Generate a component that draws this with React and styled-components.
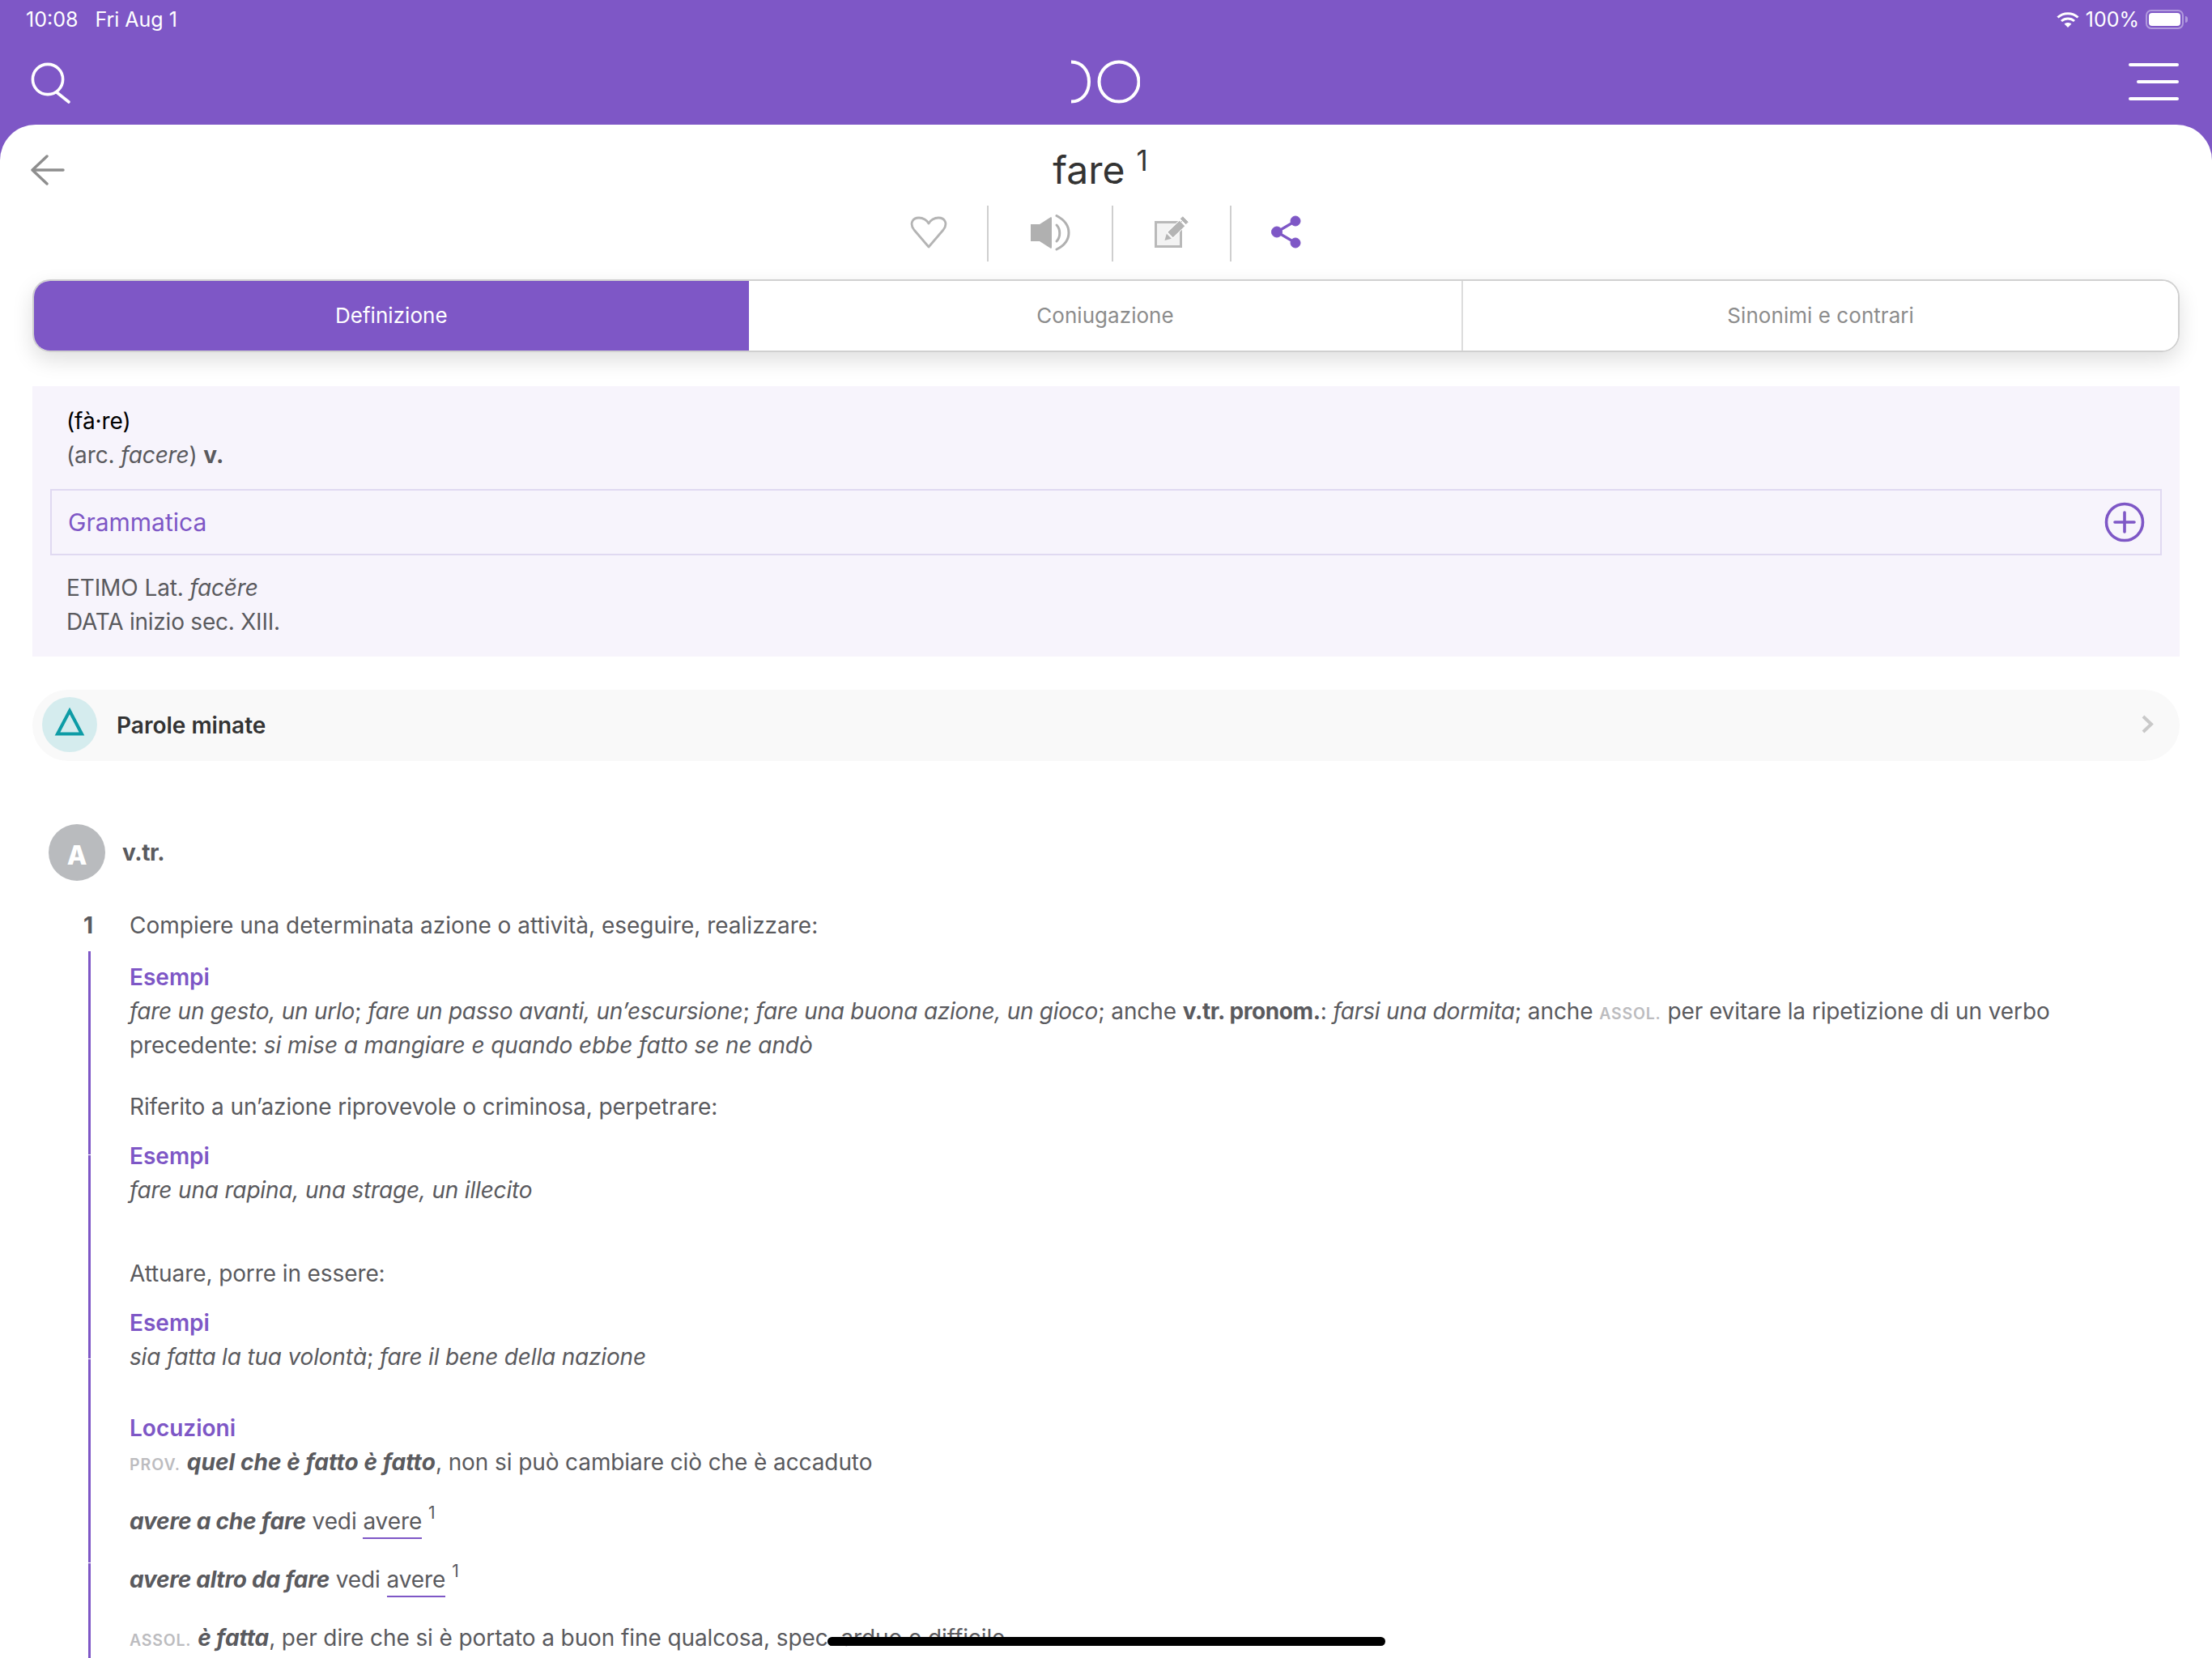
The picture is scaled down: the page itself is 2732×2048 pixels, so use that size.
import React from "react";
import styled, { createGlobalStyle } from "styled-components";

const PURPLE = "#7e57c6";
const TEXT = "#5a5a5e";

const Global = createGlobalStyle`
  html, body { margin: 0; padding: 0; background: #fff; }
  * { box-sizing: border-box; }
`;

const Screen = styled.div`
  position: relative;
  width: 2732px;
  height: 2048px;
  overflow: hidden;
  display: flex;
  flex-direction: column;
  background: ${PURPLE};
  font-family: Inter, "Noto Sans", sans-serif;
  font-size: 28px;
  line-height: 42px;
  letter-spacing: -0.1px;
  color: ${TEXT};
`;

const StatusBar = styled.div`
  height: 48px;
  flex: none;
  display: flex;
  align-items: center;
  justify-content: space-between;
  padding: 0 35px 0 32px;
  color: #fff;
  font-size: 25px;
  letter-spacing: 0;
  line-height: 48px;
`;
const StatusGroup = styled.div`
  display: flex;
  align-items: center;
  gap: ${(p) => p.$gap}px;
`;
const Battery = styled.div`
  position: relative;
  width: 47px;
  height: 24px;
  border: 2px solid rgba(255, 255, 255, 0.4);
  border-radius: 7px;
  padding: 2px;
  &::before {
    content: "";
    display: block;
    height: 100%;
    background: #fff;
    border-radius: 4px;
  }
  &::after {
    content: "";
    position: absolute;
    right: -7px;
    top: 6px;
    width: 3px;
    height: 8px;
    background: rgba(255, 255, 255, 0.4);
    border-radius: 0 3px 3px 0;
  }
`;

const NavBar = styled.div`
  height: 106px;
  flex: none;
  display: grid;
  grid-template-columns: 1fr auto 1fr;
  align-items: center;
  padding: 0 41px 0 38px;
`;
const MenuButton = styled.div`
  justify-self: end;
  width: 62px;
  display: flex;
  flex-direction: column;
  align-items: flex-end;
  gap: 17px;
`;
const MenuLine = styled.span`
  display: block;
  height: 4px;
  border-radius: 2px;
  background: #fff;
  width: ${(p) => p.$w}px;
`;

const Sheet = styled.div`
  flex: 1;
  min-height: 0;
  background: #fff;
  border-radius: 44px 44px 0 0;
  padding: 0 40px;
`;
const TitleRow = styled.div`
  height: 100px;
  display: grid;
  grid-template-columns: 1fr auto 1fr;
  align-items: start;
`;
const Back = styled.div`
  padding-top: 37px;
  height: 100px;
  margin-left: -2px;
  display: flex;
`;
const Title = styled.h1`
  margin: 0 7px 0 -7px;
  padding-top: 26px;
  font-size: 48px;
  line-height: 60px;
  font-weight: 400;
  letter-spacing: 0;
  color: #333;
  white-space: nowrap;
  sup {
    font-size: 35px;
    line-height: 0;
    margin-left: 14px;
    position: relative;
    top: 1px;
    vertical-align: super;
  }
`;
const ActionRow = styled.div`
  display: flex;
  justify-content: center;
  height: 69px;
  margin-bottom: 22px;
`;
const ActionCell = styled.div`
  width: ${(p) => p.$w}px;
  display: flex;
  justify-content: center;
  padding-top: ${(p) => p.$top}px;
  border-right: ${(p) => (p.$last ? "none" : "2px solid #cfcfcf")};
  svg { display: block; }
`;

const Tabs = styled.div`
  height: 90px;
  display: grid;
  grid-template-columns: repeat(3, 1fr);
  border: 2px solid #d0d0d0;
  border-radius: 22px;
  overflow: hidden;
  box-shadow: 0 10px 26px rgba(0, 0, 0, 0.13);
`;
const Tab = styled.div`
  display: flex;
  align-items: center;
  justify-content: center;
  font-size: 26px;
  letter-spacing: 0.05px;
  background: ${(p) => (p.$active ? PURPLE : "#fff")};
  color: ${(p) => (p.$active ? "#fff" : "#8c8c8c")};
  border-right: ${(p) => (p.$divider ? "2px solid #dcdcdc" : "none")};
`;

const InfoPanel = styled.section`
  margin-top: 42px;
  background: #f7f4fc;
  padding: 22px 22px 22px;
`;
const InfoLine = styled.div`
  padding-left: 20px;
  color: ${(p) => p.$color || TEXT};
  letter-spacing: ${(p) => p.$ls ?? -0.1}px;
`;
const Accordion = styled.div`
  height: 82px;
  margin: 21px 0 19px;
  border: 2px solid #e0d9f1;
  display: flex;
  align-items: center;
  justify-content: space-between;
  padding: 0 19px 0 20px;
  color: ${PURPLE};
  font-size: 30px;
  letter-spacing: 0;
  svg { display: block; }
`;

const MinedRow = styled.div`
  height: 88px;
  margin-top: 41px;
  border-radius: 44px;
  background: #f9f9f9;
  display: flex;
  align-items: center;
  padding: 0 31px 0 12px;
  > svg { margin-top: -3px; }
`;
const MinedBadge = styled.div`
  width: 68px;
  height: 68px;
  margin-top: -3px;
  border-radius: 50%;
  background: #d5ecee;
  display: flex;
  align-items: center;
  justify-content: center;
  flex: none;
  svg { display: block; margin-top: -8px; }
`;
const MinedLabel = styled.div`
  flex: 1;
  margin-left: 24px;
  font-weight: 600;
  letter-spacing: 0;
  color: #333;
`;

const PartRow = styled.div`
  height: 70px;
  margin: 78px 0 34px 20px;
  display: flex;
  align-items: center;
  gap: 21px;
`;
const PartBadge = styled.div`
  width: 70px;
  height: 70px;
  padding-top: 7px;
  border-radius: 50%;
  background: #b9bbbe;
  color: #fff;
  font-weight: 800;
  font-size: 32px;
  display: flex;
  align-items: center;
  justify-content: center;
`;
const PartLabel = styled.div`
  font-weight: 700;
  letter-spacing: -0.4px;
`;
const SenseHead = styled.div`
  display: grid;
  grid-template-columns: 57px 1fr;
  padding-left: 63px;
  letter-spacing: 0;
`;
const SenseNumber = styled.div`
  font-weight: 700;
`;
const SenseBody = styled.div`
  margin: 11px 0 0 69px;
  padding: 11px 0 24px 51px;
  background-image: linear-gradient(to bottom, ${PURPLE} 0, ${PURPLE} 251px, #fff 251px, #fff 252px);
  background-size: 3px 252px;
  background-repeat: repeat-y;
  background-position: left top;
`;
const Line = styled.div`
  margin-top: ${(p) => p.$mt ?? 0}px;
  white-space: nowrap;
`;
const Wrapped = styled.div`
  width: 2440px;
`;
const SectionTitle = styled.div`
  margin-top: ${(p) => p.$mt ?? 0}px;
  color: ${PURPLE};
  font-weight: 600;
  letter-spacing: 0;
`;
const Example = styled.i`
  letter-spacing: ${(p) => p.$ls ?? -0.18}px;
`;
const Strong = styled.b`
  letter-spacing: -0.4px;
`;
const Phrase = styled.b`
  font-style: italic;
  letter-spacing: ${(p) => p.$ls ?? 0}px;
`;
const Tag = styled.span`
  text-transform: uppercase;
  font-size: 19.5px;
  line-height: 1;
  font-weight: 600;
  color: #bcbcbf;
  letter-spacing: ${(p) => p.$ls ?? 0.8}px;
`;
const LinkWord = styled.span`
  border-bottom: 2px solid ${PURPLE};
  padding-bottom: 3px;
`;
const Sup = styled.sup`
  font-size: 21px;
  line-height: 0;
  margin-left: 8px;
  position: relative;
  top: -3px;
`;
const HomeIndicator = styled.div`
  position: absolute;
  left: 1022px;
  top: 2022px;
  width: 689px;
  height: 11px;
  border-radius: 6px;
  background: #000;
`;

const Wifi = () => (
  <svg width="28" height="21" viewBox="0 0 28 21" fill="none" stroke="#fff" strokeWidth="3">
    <path d="M1.5 7.5 C8.5 1 19.5 1 26.5 7.5" />
    <path d="M6 12 C10.5 8 17.5 8 22 12" />
    <path d="M14 20 L9.6 15.6 C12 13.6 16 13.6 18.4 15.6 Z" fill="#fff" stroke="none" />
  </svg>
);

const Search = () => (
  <svg width="50" height="56" viewBox="0 -4 50 56" fill="none" stroke="#fff" strokeWidth="3.6" strokeLinecap="round">
    <circle cx="21" cy="21" r="18.6" />
    <path d="M32 37 L47 49" />
  </svg>
);

const Logo = () => (
  <svg width="86" height="54" viewBox="0 0 86 54" fill="none" stroke="#fff" strokeWidth="4">
    <path d="M1 2.5 C14 2.5 23 13 23 27 C23 41 14 51.5 1 51.5" />
    <circle cx="60" cy="27" r="24.5" />
  </svg>
);

const ArrowBack = () => (
  <svg width="42" height="38" viewBox="0 0 42 38" fill="none" stroke="#8e8e8e" strokeWidth="3.4" strokeLinecap="round" strokeLinejoin="round">
    <path d="M20 2 L2 19 L20 36" />
    <path d="M3 19 H40" />
  </svg>
);

const Heart = () => (
  <svg width="46" height="40" viewBox="0 0 46 40" fill="none" stroke="#b4b4b4" strokeWidth="2.8" strokeLinejoin="round">
    <path d="M23 38 L5 17 C-1 9 3 2 11 2 C16 2 21 5 23 9 C25 5 30 2 35 2 C43 2 47 9 41 17 Z" />
  </svg>
);

const Speaker = () => (
  <svg width="50" height="45" viewBox="0 0 50 45" fill="none" stroke="#b0b0b0" strokeLinecap="round">
    <path d="M1 12 H12 L26 3 Q27 3 27 5 V40 Q27 42 26 42 L12 33 H1 Z" fill="#b0b0b0" stroke="none" />
    <path d="M33 13 C38 18 38 28 33 33" strokeWidth="3" />
    <path d="M33 1.5 C53 12 53 33 33 43" strokeWidth="3" />
  </svg>
);

const Edit = () => (
  <svg width="46" height="41" viewBox="0 0 46 41" fill="none">
    <rect x="3.5" y="8.5" width="31" height="30" fill="#f3f3f3" stroke="#b9b9b9" strokeWidth="3" />
    <path d="M18.3 20.8 L32.8 6.8 L39.2 13.2 L24.7 27.2 Z" fill="#b4b4b4" stroke="#fff" strokeWidth="2" paintOrder="stroke" />
    <path d="M14.5 31 L16.8 22.8 L22.8 28.8 Z" fill="#b4b4b4" />
    <path d="M36.8 1.8 L43.2 8.2 L40.7 10.7 L34.3 4.3 Z" fill="#b4b4b4" strokeLinejoin="round" stroke="#b4b4b4" />
  </svg>
);

const Share = () => (
  <svg width="38" height="41" viewBox="0 0 38 41" fill={PURPLE} stroke={PURPLE}>
    <path d="M30 7 L7 20.5 L30 34" fill="none" strokeWidth="3.2" />
    <circle cx="7" cy="20.5" r="6.5" />
    <circle cx="30" cy="7" r="6" />
    <circle cx="30" cy="34" r="6" />
  </svg>
);

const PlusCircle = () => (
  <svg width="50" height="50" viewBox="0 0 50 50" fill="none" stroke={PURPLE} strokeWidth="3.6" strokeLinecap="round">
    <circle cx="25" cy="25" r="22.5" />
    <path d="M25 13 V37 M13 25 H37" />
  </svg>
);

const Triangle = () => (
  <svg width="38" height="36" viewBox="0 0 38 36" fill="none" stroke="#0e9ca6" strokeWidth="4">
    <path d="M19 5 L34 33.5 H4 Z" />
  </svg>
);

const Chevron = () => (
  <svg width="16" height="23" viewBox="0 0 16 23" fill="none" stroke="#c9c9c9" strokeWidth="4">
    <path d="M2 2 L12 11.5 L2 21" />
  </svg>
);

export default function App() {
  return (
    <Screen>
      <Global />
      <StatusBar>
        <StatusGroup $gap={21}>
          <span>10:08</span>
          <span>Fri Aug 1</span>
        </StatusGroup>
        <StatusGroup $gap={8}>
          <Wifi />
          <span>100%</span>
          <Battery />
        </StatusGroup>
      </StatusBar>
      <NavBar>
        <Search />
        <Logo />
        <MenuButton>
          <MenuLine $w={62} />
          <MenuLine $w={52} />
          <MenuLine $w={62} />
        </MenuButton>
      </NavBar>
      <Sheet>
        <TitleRow>
          <Back>
            <ArrowBack />
          </Back>
          <Title>
            fare<sup>1</sup>
          </Title>
          <span />
        </TitleRow>
        <ActionRow>
          <ActionCell $w={146} $top={13}><Heart /></ActionCell>
          <ActionCell $w={154} $top={11}><Speaker /></ActionCell>
          <ActionCell $w={146} $top={12}><Edit /></ActionCell>
          <ActionCell $w={136} $top={12} $last><Share /></ActionCell>
        </ActionRow>
        <Tabs>
          <Tab $active>Definizione</Tab>
          <Tab $divider>Coniugazione</Tab>
          <Tab>Sinonimi e contrari</Tab>
        </Tabs>
        <InfoPanel>
          <InfoLine $color="#000">(fà·re)</InfoLine>
          <InfoLine>
            (arc. <Example>facere</Example>) <b>v.</b>
          </InfoLine>
          <Accordion>
            Grammatica
            <PlusCircle />
          </Accordion>
          <InfoLine>
            ETIMO Lat. <Example>facĕre</Example>
          </InfoLine>
          <InfoLine $ls={-0.23}>DATA inizio sec. XIII.</InfoLine>
        </InfoPanel>
        <MinedRow>
          <MinedBadge><Triangle /></MinedBadge>
          <MinedLabel>Parole minate</MinedLabel>
          <Chevron />
        </MinedRow>
        <PartRow>
          <PartBadge>A</PartBadge>
          <PartLabel>v.tr.</PartLabel>
        </PartRow>
        <SenseHead>
          <SenseNumber>1</SenseNumber>
          <div>Compiere una determinata azione o attività, eseguire, realizzare:</div>
        </SenseHead>
        <SenseBody>
          <SectionTitle>Esempi</SectionTitle>
          <Wrapped>
            <Example $ls={-0.26}>fare un gesto, un urlo</Example>; <Example $ls={-0.26}>fare un passo avanti, un’escursione</Example>; <Example $ls={-0.26}>fare una buona azione, un gioco</Example>; anche <Strong>v.tr. pronom.</Strong>: <Example>farsi una dormita</Example>; anche <Tag>assol.</Tag> per evitare la ripetizione di un verbo precedente: <Example $ls={-0.08}>si mise a mangiare e quando ebbe fatto se ne andò</Example>
          </Wrapped>
          <Line $mt={34}>Riferito a un’azione riprovevole o criminosa, perpetrare:</Line>
          <SectionTitle $mt={19}>Esempi</SectionTitle>
          <Line><Example>fare una rapina, una strage, un illecito</Example></Line>
          <Line $mt={61}>Attuare, porre in essere:</Line>
          <SectionTitle $mt={19}>Esempi</SectionTitle>
          <Line><Example>sia fatta la tua volontà</Example>; <Example>fare il bene della nazione</Example></Line>
          <SectionTitle $mt={46}>Locuzioni</SectionTitle>
          <Line><Tag $ls={1}>prov.</Tag> <Phrase $ls={0.05}>quel che è fatto è fatto</Phrase>, non si può cambiare ciò che è accaduto</Line>
          <Line $mt={31}><Phrase $ls={-0.2}>avere a che fare</Phrase> vedi <LinkWord>avere</LinkWord><Sup>1</Sup></Line>
          <Line $mt={30}><Phrase $ls={-0.27}>avere altro da fare</Phrase> vedi <LinkWord>avere</LinkWord><Sup>1</Sup></Line>
          <Line $mt={30}><Tag>assol.</Tag> <Phrase $ls={-0.1}>è fatta</Phrase>, per dire che si è portato a buon fine qualcosa, spec. arduo e difficile</Line>
        </SenseBody>
      </Sheet>
      <HomeIndicator />
    </Screen>
  );
}
